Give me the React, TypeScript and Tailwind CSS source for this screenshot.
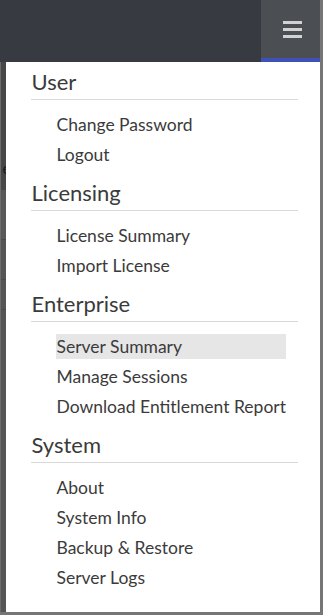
import React from "react";

const sections = [
  { title: "User", items: ["Change Password", "Logout"] },
  { title: "Licensing", items: ["License Summary", "Import License"] },
  {
    title: "Enterprise",
    items: ["Server Summary", "Manage Sessions", "Download Entitlement Report"],
  },
  {
    title: "System",
    items: ["About", "System Info", "Backup & Restore", "Server Logs"],
  },
];

const active = "Server Summary";

const App = () => {
  return (
    <div
      className="flex h-[615px] w-[323px] flex-col overflow-hidden bg-[#767676] pb-[3px] pr-[3px] text-[#3b3b3b]"
      style={{ fontFamily: "Lato, 'Open Sans', sans-serif" }}
    >
      <div className="flex h-[62px] shrink-0">
        <div className="flex-1 bg-[#373a41]" />
        <div className="flex w-[59px] flex-col bg-[#4b4f53]">
          <div className="flex flex-1 flex-col items-center justify-center gap-[4px] pl-[3px]">
            <span className="h-[3px] w-[19px] bg-[#d2d2d2]" />
            <span className="h-[3px] w-[19px] bg-[#d2d2d2]" />
            <span className="h-[3px] w-[19px] bg-[#d2d2d2]" />
          </div>
          <div className="h-[4px] bg-[#3f51b5]" />
        </div>
      </div>

      <div className="flex flex-1">
        <div className="flex w-[7px] flex-col border-l border-[#6c6c6c]">
          <div className="flex h-[128px] items-end justify-end overflow-hidden bg-[#474747] pb-[14px] text-[15px] leading-none text-[#1a1a1a]">
            <span className="-mr-[5px]">e</span>
          </div>
          <div className="h-[50px] border-b border-[#4a4a4a] bg-[#585858]" />
          <div className="h-[40px] border-b border-[#4a4a4a] bg-[#555]" />
          <div className="h-[30px] border-b border-[#4a4a4a] bg-[#555]" />
          <div className="flex-1 bg-[#555]" />
        </div>

        <div className="flex-1 bg-white pl-[25px] pr-[22px] pt-[5px]">
          {sections.map((section) => (
            <div key={section.title} className="mb-[11px]">
              <div className="border-b border-[#d9d9d9] pb-[2px] pl-[1px] text-[22px] leading-[30px]">
                {section.title}
              </div>
              <ul className="mt-[12px] flex flex-col gap-[5px] pl-[25px] pr-[12px]">
                {section.items.map((item) => (
                  <li
                    key={item}
                    className={
                      item === active
                        ? "h-[25px] whitespace-nowrap bg-[#e6e6e6] pl-[1px] text-[17.5px] leading-[25px]"
                        : "h-[25px] whitespace-nowrap pl-[1px] text-[17.5px] leading-[25px]"
                    }
                  >
                    {item}
                  </li>
                ))}
              </ul>
            </div>
          ))}
        </div>
      </div>
    </div>
  );
};

export default App;
